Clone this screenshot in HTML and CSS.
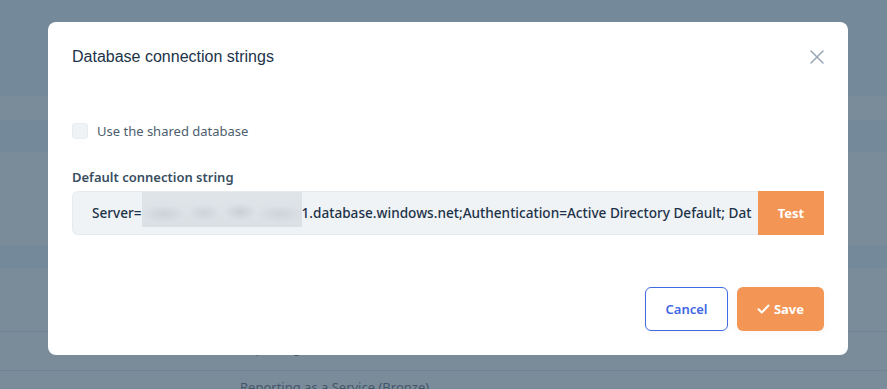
FILE: index.html
```html
<!DOCTYPE html>
<html lang="en">
<head>
  <meta charset="UTF-8">
  <title>Database connection strings</title>
  <link rel="stylesheet" href="styles.css">
</head>
<body>
  <div class="page">
    <div class="band band-dark" style="height: 96px"></div>
    <div class="band band-light" style="height: 24px"></div>
    <div class="band band-dark" style="height: 32px"></div>
    <div class="band band-light" style="height: 93px"></div>
    <div class="band band-dark" style="height: 23px"></div>
    <div class="band band-light" style="height: 63px"></div>
    <div class="row">Reporting as a Service (Silver)</div>
    <div class="row">Reporting as a Service (Bronze)</div>
  </div>

  <div class="overlay">
    <div class="modal">
      <div class="modal-header">
        <h2>Database connection strings</h2>
        <button class="close-btn" aria-label="Close">
          <svg width="14" height="14" viewBox="0 0 14 14">
            <path d="M1 1 L13 13 M13 1 L1 13" stroke="#98a6b3" stroke-width="1.5" fill="none" stroke-linecap="round"/>
          </svg>
        </button>
      </div>

      <label class="check-row">
        <span class="checkbox"></span>
        <span>Use the shared database</span>
      </label>

      <div class="field-label">Default connection string</div>
      <div class="field">
        <div class="field-input">Server=<span class="redacted"></span>1.database.windows.net;Authentication=Active Directory Default; Dat</div>
        <button class="btn-test">Test</button>
      </div>

      <div class="modal-footer">
        <button class="btn btn-cancel">Cancel</button>
        <button class="btn btn-save">
          <svg width="13" height="10" viewBox="0 0 13 10">
            <path d="M1.5 5.2 L4.8 8.5 L11.5 1.5" stroke="#fff" stroke-width="2" fill="none" stroke-linecap="round" stroke-linejoin="round"/>
          </svg>
          Save
        </button>
      </div>
    </div>
  </div>
</body>
</html>
```

FILE: styles.css
```css
body {
  margin: 0;
  font-family: "Noto Sans", "Open Sans", sans-serif;
  background-color: #7a8c99;
  overflow: hidden;
}

.page {
  height: 389px;
  overflow: hidden;
}

.band-dark {
  background-color: #748999;
}

.band-light {
  background-color: #7a8c99;
}

.row {
  height: 38px;
  border-top: 1px solid #708393;
  padding-left: 240px;
  line-height: 33px;
  font-size: 13px;
  color: #43566a;
}

.overlay {
  position: fixed;
  top: 0;
  left: 0;
  right: 0;
  bottom: 0;
  padding: 22px 0 0 48px;
}

.modal {
  width: 800px;
  height: 333px;
  box-sizing: border-box;
  background: white;
  border-radius: 8px;
  padding: 24px;
  display: flex;
  flex-direction: column;
}

.modal-header {
  display: flex;
  justify-content: space-between;
  align-items: center;
  height: 22px;
}

.modal-header h2 {
  margin: 0;
  font-family: "Liberation Sans", Arial, sans-serif;
  font-weight: normal;
  font-size: 16px;
  line-height: 22px;
  color: #1b3349;
}

.close-btn {
  border: none;
  background: none;
  padding: 0;
  width: 14px;
  height: 14px;
  display: flex;
}

.check-row {
  margin-top: 55px;
  display: flex;
  align-items: center;
  gap: 9px;
  height: 16px;
  font-size: 13px;
  color: #4d5e6e;
}

.checkbox {
  width: 16px;
  height: 16px;
  border-radius: 3px;
  background: #eff3f6;
  border: 1px solid #e8edf1;
  box-sizing: border-box;
}

.field-label {
  margin-top: 29px;
  font-size: 13px;
  line-height: 18px;
  font-weight: 600;
  color: #3a4e61;
}

.field {
  margin-top: 5px;
  display: flex;
  height: 44px;
}

.field-input {
  flex: 1;
  min-width: 0;
  background: #eff3f6;
  border: 1px solid #e6ebef;
  border-right: none;
  border-radius: 6px 0 0 6px;
  padding: 0 0 0 19px;
  white-space: nowrap;
  overflow: hidden;
  font-size: 13.6px;
  font-weight: 500;
  line-height: 42px;
  color: #1d3248;
}

.redacted {
  display: inline-block;
  width: 160px;
  height: 35px;
  vertical-align: top;
  background:
    radial-gradient(ellipse 22px 9px at 22px 22px, #cbd2d9, transparent),
    radial-gradient(ellipse 16px 9px at 62px 21px, #ccd3da, transparent),
    radial-gradient(ellipse 16px 9px at 98px 20px, #c8d0d7, transparent),
    radial-gradient(ellipse 24px 9px at 138px 22px, #cdd4db, transparent),
    linear-gradient(#dfe4e8, #dbe0e5);
}

.btn-test {
  width: 66px;
  border: none;
  background: #f29555;
  color: white;
  font-family: inherit;
  font-size: 13px;
  font-weight: 700;
}

.modal-footer {
  margin-top: auto;
  display: flex;
  justify-content: flex-end;
  gap: 9px;
}

.btn {
  height: 44px;
  border-radius: 6px;
  font-family: inherit;
  font-size: 13px;
  font-weight: 600;
  display: flex;
  align-items: center;
  justify-content: center;
  gap: 4px;
  box-shadow: 0 2px 10px rgba(0, 0, 0, 0.04);
}

.btn-cancel {
  width: 83px;
  background: white;
  border: 1px solid #4169e1;
  color: #4167e4;
}

.btn-save {
  width: 87px;
  background: #f29555;
  border: none;
  color: white;
  font-weight: 700;
}
```
